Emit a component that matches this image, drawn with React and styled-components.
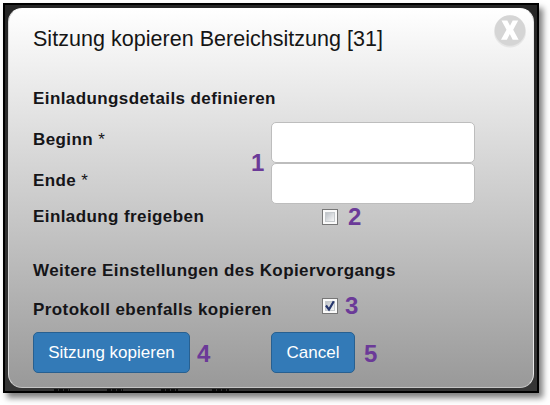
import React from "react";
import styled, { createGlobalStyle } from "styled-components";

const GlobalStyle = createGlobalStyle`
  * { box-sizing: border-box; }
  body {
    margin: 0;
    background: #fff;
    font-family: "Liberation Sans", Arial, sans-serif;
    overflow: hidden;
  }
`;

const Page = styled.div`
  width: 550px;
  height: 405px;
  padding: 3px 0 0 3px;
`;

const Backdrop = styled.div`
  position: relative;
  width: 536px;
  height: 390px;
  padding: 3px;
  border: 2px solid #000;
  background: linear-gradient(#262626, #303030 50%, #353535);
  box-shadow: 4px 5px 6px rgba(0, 0, 0, 0.5);
`;

const HiddenPageEdge = styled.svg`
  position: absolute;
  left: 49px;
  bottom: 0;
  width: 178px;
  height: 3px;
`;

const Dialog = styled.main`
  position: relative;
  width: 526px;
  height: 380px;
  padding: 0 24px;
  border: 1px solid;
  border-color: #fff #e8e8e8 #c4c4c4 #d8d8d8;
  border-radius: 14px;
  background: linear-gradient(#fff, #999);
`;

const Title = styled.h1`
  margin: 0;
  height: 79px;
  padding-top: 17px;
  font-size: 21.5px;
  line-height: 26px;
  font-weight: 400;
  letter-spacing: 0.03px;
  color: #151515;
  white-space: nowrap;
`;

const Row = styled.div`
  display: grid;
  grid-template-columns: 238px 1fr;
  height: ${(p) => p.$height}px;
`;

const Label = styled.label`
  padding-top: ${(p) => p.$top}px;
  font-size: 17px;
  line-height: 20px;
  font-weight: 700;
  letter-spacing: 0.41px;
  color: #151518;
  white-space: nowrap;
`;

const Star = styled.span`
  font-weight: 400;
`;

const Field = styled.input`
  width: 204px;
  height: 41px;
  border: 1px solid #bdbdbd;
  border-radius: 5px;
  background: #fff;
  outline: none;
`;

const CheckCell = styled.div`
  display: flex;
  gap: ${(p) => p.$gap}px;
  padding: ${(p) => p.$top}px 0 0 51px;
`;

const CheckBox = styled.svg`
  display: block;
  width: 16px;
  height: 16px;
  margin-top: 4px;
`;

const Note = styled.span`
  color: #6b3a98;
  font-size: 24px;
  line-height: 24px;
  font-weight: 700;
`;

const FieldNote = styled(Note)`
  position: absolute;
  left: 242px;
  top: 142px;
`;

const ButtonCell = styled.div`
  display: flex;
  align-items: center;
  gap: ${(p) => p.$gap}px;
`;

const Button = styled.button`
  width: ${(p) => p.$width}px;
  height: 41px;
  padding: 0;
  border: 1px solid #286090;
  border-radius: 5px;
  background: #337ab7;
  color: #fff;
  font-family: inherit;
  font-size: 17px;
  white-space: nowrap;
`;

const ButtonNote = styled(Note)`
  padding-top: 2px;
`;

const Close = styled.svg`
  position: absolute;
  right: 6px;
  top: 4px;
  width: 34px;
  height: 36px;
`;

function Check({ checked }) {
  return (
    <CheckBox viewBox="0 0 16 16">
      <defs>
        <linearGradient id="well" x1="0" y1="0" x2="1" y2="1">
          <stop offset="0" stopColor="#b9bec4" />
          <stop offset="1" stopColor="#fafafa" />
        </linearGradient>
      </defs>
      <rect x="0.5" y="0.5" width="15" height="15" fill="#fafafa" stroke="#777" />
      <rect x="3.5" y="3.5" width="9" height="9" fill="url(#well)" stroke="#c6cacd" />
      {checked && (
        <path d="M4 7.5 7 11.6 11.8 3.3" fill="none" stroke="#26366d" strokeWidth="2.2" />
      )}
    </CheckBox>
  );
}

export default function App() {
  return (
    <Page>
      <GlobalStyle />
      <Backdrop>
        <HiddenPageEdge viewBox="0 0 178 3">
          <path
            d="M0 2H16M53 2H69M107 2H124M158 2H175"
            stroke="#0c0c0c"
            strokeWidth="2"
            strokeDasharray="4 1"
          />
        </HiddenPageEdge>
        <Dialog>
          <Title>Sitzung kopieren Bereichsitzung [31]</Title>
          <Close viewBox="0 0 34 36">
            <circle cx="17" cy="18.5" r="16" fill="#c9c9c9" opacity="0.35" />
            <circle cx="17" cy="17.5" r="15.3" fill="#d5d5d5" />
            <path
              d="M8.5 7.5H14.3L17 12.8 19.7 7.5H25.2L20.2 16.8 25.6 26.7H19.7L16.8 21 13.9 26.7H8L13.5 16.8Z"
              fill="#fff"
            />
          </Close>
          <Row $height={34}>
            <Label $top={1}>Einladungsdetails definieren</Label>
          </Row>
          <Row $height={41}>
            <Label $top={8}>Beginn <Star>*</Star></Label>
            <Field />
          </Row>
          <FieldNote>1</FieldNote>
          <Row $height={41}>
            <Label $top={8}>Ende <Star>*</Star></Label>
            <Field />
          </Row>
          <Row $height={44}>
            <Label $top={3}>Einladung freigeben</Label>
            <CheckCell $top={1} $gap={10}>
              <Check />
              <Note>2</Note>
            </CheckCell>
          </Row>
          <Row $height={44}>
            <Label $top={13}>Weitere Einstellungen des Kopiervorgangs</Label>
          </Row>
          <Row $height={40}>
            <Label $top={8}>Protokoll ebenfalls kopieren</Label>
            <CheckCell $top={2} $gap={7}>
              <Check checked />
              <Note>3</Note>
            </CheckCell>
          </Row>
          <Row $height={41}>
            <ButtonCell $gap={7}>
              <Button $width={157}>Sitzung kopieren</Button>
              <ButtonNote>4</ButtonNote>
            </ButtonCell>
            <ButtonCell $gap={9}>
              <Button $width={84}>Cancel</Button>
              <ButtonNote>5</ButtonNote>
            </ButtonCell>
          </Row>
        </Dialog>
      </Backdrop>
    </Page>
  );
}
